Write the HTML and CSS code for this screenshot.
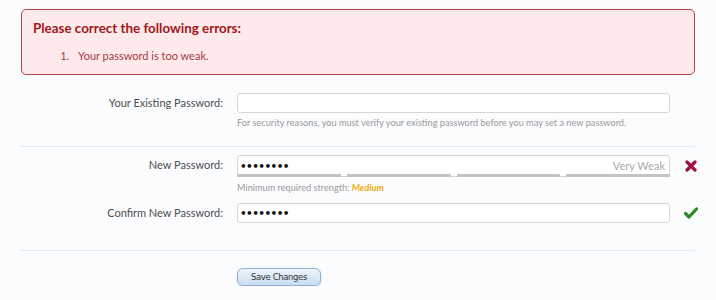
FILE: index.html
```html
<!DOCTYPE html>
<html lang="en">
<head>
    <meta charset="UTF-8">
    <meta name="viewport" content="width=device-width, initial-scale=1.0">
    <title>Change Password</title>
    <link rel="stylesheet" href="styles.css">
</head>
<body>
    <div class="page">
        <div class="errors">
            <h2>Please correct the following errors:</h2>
            <ol>
                <li>Your password is too weak.</li>
            </ol>
        </div>

        <form class="password-form">
            <div class="section">
                <div class="row">
                    <label for="old">Your Existing Password:</label>
                    <div class="field">
                        <input type="password" id="old" class="text-box">
                        <p class="hint">For security reasons, you must verify your existing password before you may set a new password.</p>
                    </div>
                </div>
            </div>

            <div class="section">
                <div class="row">
                    <label for="new">New Password:</label>
                    <div class="field">
                        <div class="meter-wrap">
                            <input type="password" id="new" class="text-box tall" value="abcdefgh">
                            <span class="meter-label">Very Weak</span>
                            <div class="meter">
                                <span></span><span></span><span></span><span></span>
                            </div>
                        </div>
                        <p class="hint strength">Minimum required strength: <em>Medium</em></p>
                    </div>
                    <svg class="icon" width="12" height="12" viewBox="0 0 12 12">
                        <path d="M2 2 L10 10 M10 2 L2 10" stroke="#a3123e" stroke-width="3.2" stroke-linecap="round"/>
                    </svg>
                </div>
                <div class="row confirm">
                    <label for="confirm">Confirm New Password:</label>
                    <div class="field">
                        <input type="password" id="confirm" class="text-box" value="abcdefgh">
                    </div>
                    <svg class="icon" width="14" height="12" viewBox="0 0 14 12">
                        <path d="M1.5 6.5 L5 10 L12.5 2" fill="none" stroke="#2b8a25" stroke-width="3.2" stroke-linecap="round" stroke-linejoin="round"/>
                    </svg>
                </div>
            </div>

            <div class="buttons">
                <button type="button">Save Changes</button>
            </div>
        </form>
    </div>
</body>
</html>
```
FILE: styles.css
```css
*{
    margin: 0;
    padding: 0;
    box-sizing: border-box;
}
body{
    background-color: #fbfcfe;
    font-family: Lato, "DejaVu Sans", sans-serif;
    color: #505050;
}
.page{
    padding: 9px 21px 0 20px;
}
.errors{
    margin-left: 1px;
    border: 1px solid #b0464a;
    border-radius: 5px;
    background-color: #feeaea;
    padding: 9px 11px 10px;
}
.errors h2{
    font-size: 13.4px;
    line-height: 18px;
    color: #a2161c;
    font-weight: bold;
}
.errors ol{
    margin-top: 11px;
    padding-left: 39px;
    font-size: 11px;
    line-height: 16px;
    color: #a83a44;
}
.errors li{
    padding-left: 6px;
}
.section{
    border-bottom: 1px solid #dbedf7;
    padding: 18px 0 17px;
}
.section + .section{
    padding: 8px 0 27px;
}
.row{
    display: grid;
    grid-template-columns: 203px 433px 16px;
    column-gap: 14px;
    align-items: start;
}
.row label{
    text-align: right;
    font-size: 11px;
    line-height: 20px;
    color: #4d4d4d;
}
.text-box{
    display: block;
    width: 100%;
    height: 20px;
    border: 1px solid #d6d6d6;
    border-radius: 3px;
    background-color: #fff;
    padding: 0 2px;
    font-family: "DejaVu Sans", sans-serif;
    font-size: 10.5px;
    font-weight: bold;
    letter-spacing: -0.6px;
    color: #111;
    outline: none;
}
.text-box.tall{
    height: 22px;
}
.meter-wrap{
    position: relative;
}
.meter-label{
    position: absolute;
    right: 5px;
    top: 3px;
    font-size: 11px;
    line-height: 16px;
    color: #aaa;
}
.meter{
    position: absolute;
    left: 0;
    right: 0;
    bottom: 0;
    display: flex;
    gap: 6px;
}
.meter span{
    flex: 1;
    height: 3px;
    background-color: #c4c4c4;
    border-radius: 1px;
}
.hint{
    margin-top: 3px;
    font-size: 9.2px;
    line-height: 13px;
    color: #9a9a9a;
}
.hint.strength{
    margin-top: 4px;
}
.hint em{
    color: #f0ac0c;
    font-weight: bold;
}
.icon{
    margin-top: 5px;
    margin-left: 1px;
}
.row.confirm{
    margin-top: 9px;
}
.row.confirm .icon{
    margin-top: 4px;
    margin-left: 0;
}
.buttons{
    padding: 13px 0 0 217px;
}
button{
    width: 84px;
    height: 18px;
    border: 1px solid #8db2d2;
    border-radius: 6px;
    background: linear-gradient(#eef5fc, #c9def0);
    box-shadow: 0 1px 2px rgba(120, 160, 200, 0.4);
    font-family: "DejaVu Sans Condensed", "DejaVu Sans", sans-serif;
    font-size: 9.5px;
    letter-spacing: -0.4px;
    color: #333;
    cursor: pointer;
}
```
